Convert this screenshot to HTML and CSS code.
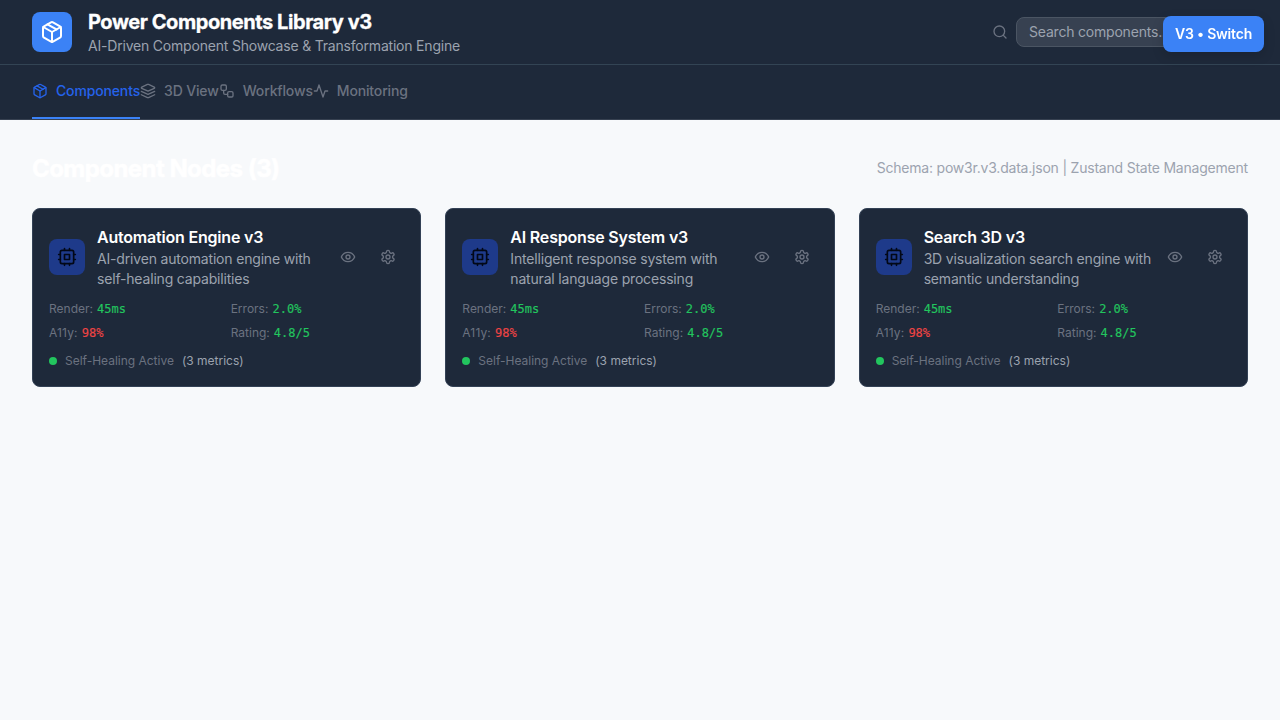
FILE: index.html
```html
<!DOCTYPE html>
<html lang="en">
<head>
<meta charset="utf-8">
<title>Power Components Library v3</title>
<link rel="stylesheet" href="styles.css">
</head>
<body>
<svg class="sprite" aria-hidden="true">
  <symbol id="box" viewBox="0 0 24 24"><path d="m7.5 4.27 9 5.15"/><path d="M21 8a2 2 0 0 0-1-1.73l-7-4a2 2 0 0 0-2 0l-7 4A2 2 0 0 0 3 8v8a2 2 0 0 0 1 1.73l7 4a2 2 0 0 0 2 0l7-4A2 2 0 0 0 21 16Z"/><path d="m3.3 7 8.7 5 8.7-5"/><path d="M12 22V12"/></symbol>
  <symbol id="layers" viewBox="0 0 24 24"><path d="m12.83 2.18a2 2 0 0 0-1.66 0L2.6 6.08a1 1 0 0 0 0 1.83l8.58 3.91a2 2 0 0 0 1.66 0l8.58-3.9a1 1 0 0 0 0-1.83Z"/><path d="m22 17.65-9.17 4.16a2 2 0 0 1-1.66 0L2 17.65"/><path d="m22 12.65-9.17 4.16a2 2 0 0 1-1.66 0L2 12.65"/></symbol>
  <symbol id="workflow" viewBox="0 0 24 24"><rect width="8" height="8" x="3" y="3" rx="2"/><path d="M7 11v4a2 2 0 0 0 2 2h4"/><rect width="8" height="8" x="13" y="13" rx="2"/></symbol>
  <symbol id="activity" viewBox="0 0 24 24"><path d="M22 12h-4l-3 9L9 3l-3 9H2"/></symbol>
  <symbol id="search" viewBox="0 0 24 24"><circle cx="11" cy="11" r="8"/><path d="m21 21-4.3-4.3"/></symbol>
  <symbol id="cpu" viewBox="0 0 24 24"><rect x="4" y="4" width="16" height="16" rx="2"/><rect x="9" y="9" width="6" height="6"/><path d="M15 2v2M15 20v2M2 15h2M2 9h2M20 15h2M20 9h2M9 2v2M9 20v2"/></symbol>
  <symbol id="eye" viewBox="0 0 24 24"><path d="M2 12s3-7 10-7 10 7 10 7-3 7-10 7-10-7-10-7Z"/><circle cx="12" cy="12" r="3"/></symbol>
  <symbol id="settings" viewBox="0 0 24 24"><path d="M12.22 2h-.44a2 2 0 0 0-2 2v.18a2 2 0 0 1-1 1.73l-.43.25a2 2 0 0 1-2 0l-.15-.08a2 2 0 0 0-2.73.73l-.22.38a2 2 0 0 0 .73 2.73l.15.1a2 2 0 0 1 1 1.72v.51a2 2 0 0 1-1 1.74l-.15.09a2 2 0 0 0-.73 2.73l.22.38a2 2 0 0 0 2.73.73l.15-.08a2 2 0 0 1 2 0l.43.25a2 2 0 0 1 1 1.73V20a2 2 0 0 0 2 2h.44a2 2 0 0 0 2-2v-.18a2 2 0 0 1 1-1.73l.43-.25a2 2 0 0 1 2 0l.15.08a2 2 0 0 0 2.73-.73l.22-.39a2 2 0 0 0-.73-2.73l-.15-.08a2 2 0 0 1-1-1.74v-.5a2 2 0 0 1 1-1.74l.15-.09a2 2 0 0 0 .73-2.73l-.22-.38a2 2 0 0 0-2.73-.73l-.15.08a2 2 0 0 1-2 0l-.43-.25a2 2 0 0 1-1-1.73V4a2 2 0 0 0-2-2z"/><circle cx="12" cy="12" r="3"/></symbol>
</svg>

<header class="header">
  <div class="brand">
    <div class="logo"><svg class="icon icon-lg"><use href="#box"/></svg></div>
    <div>
      <h1 class="brand-title">Power Components Library v3</h1>
      <p class="brand-sub">AI-Driven Component Showcase &amp; Transformation Engine</p>
    </div>
  </div>
  <div class="search">
    <svg class="icon"><use href="#search"/></svg>
    <input class="search-input" type="text" placeholder="Search components...">
  </div>
</header>
<button class="switch">V3 • Switch</button>

<nav class="nav">
  <a class="tab tab-active"><svg class="icon"><use href="#box"/></svg>Components</a>
  <a class="tab"><svg class="icon"><use href="#layers"/></svg>3D View</a>
  <a class="tab"><svg class="icon"><use href="#workflow"/></svg>Workflows</a>
  <a class="tab"><svg class="icon"><use href="#activity"/></svg>Monitoring</a>
</nav>

<main class="main">
  <div class="main-head">
    <h2 class="main-title">Component Nodes (3)</h2>
    <span class="schema">Schema: pow3r.v3.data.json | Zustand State Management</span>
  </div>
  <div class="cards">
    <article class="card">
      <div class="card-head">
        <div class="card-icon"><svg class="icon icon-md"><use href="#cpu"/></svg></div>
        <div class="card-text"><h3 class="card-title">Automation Engine v3</h3><p class="card-desc">AI-driven automation engine with self-healing capabilities</p></div>
        <div class="actions"><button class="action"><svg class="icon"><use href="#eye"/></svg></button><button class="action"><svg class="icon"><use href="#settings"/></svg></button></div>
      </div>
      <div class="metrics">
        <div>Render: <span class="value good">45ms</span></div><div>Errors: <span class="value good">2.0%</span></div>
        <div><span class="a11y">A11y:</span> <span class="value bad">98%</span></div><div>Rating: <span class="value good">4.8/5</span></div>
      </div>
      <div class="status"><span class="dot"></span><span>Self-Healing Active</span><span class="count">(3 metrics)</span></div>
    </article>
    <article class="card">
      <div class="card-head">
        <div class="card-icon"><svg class="icon icon-md"><use href="#cpu"/></svg></div>
        <div class="card-text"><h3 class="card-title">AI Response System v3</h3><p class="card-desc">Intelligent response system with natural language processing</p></div>
        <div class="actions"><button class="action"><svg class="icon"><use href="#eye"/></svg></button><button class="action"><svg class="icon"><use href="#settings"/></svg></button></div>
      </div>
      <div class="metrics">
        <div>Render: <span class="value good">45ms</span></div><div>Errors: <span class="value good">2.0%</span></div>
        <div><span class="a11y">A11y:</span> <span class="value bad">98%</span></div><div>Rating: <span class="value good">4.8/5</span></div>
      </div>
      <div class="status"><span class="dot"></span><span>Self-Healing Active</span><span class="count">(3 metrics)</span></div>
    </article>
    <article class="card">
      <div class="card-head">
        <div class="card-icon"><svg class="icon icon-md"><use href="#cpu"/></svg></div>
        <div class="card-text"><h3 class="card-title">Search 3D v3</h3><p class="card-desc">3D visualization search engine with semantic understanding</p></div>
        <div class="actions"><button class="action"><svg class="icon"><use href="#eye"/></svg></button><button class="action"><svg class="icon"><use href="#settings"/></svg></button></div>
      </div>
      <div class="metrics">
        <div>Render: <span class="value good">45ms</span></div><div>Errors: <span class="value good">2.0%</span></div>
        <div><span class="a11y">A11y:</span> <span class="value bad">98%</span></div><div>Rating: <span class="value good">4.8/5</span></div>
      </div>
      <div class="status"><span class="dot"></span><span>Self-Healing Active</span><span class="count">(3 metrics)</span></div>
    </article>
  </div>
</main>
</body>
</html>
```
FILE: styles.css
```css
* { box-sizing: border-box; margin: 0; padding: 0; }
body { background: #f7f9fb; font-family: Inter, "Liberation Sans", sans-serif; font-size: 14px; line-height: 20px; letter-spacing: -0.2px; color: #6b7280; min-height: 720px; }
button, input { font: inherit; letter-spacing: inherit; border: 0; background: none; color: inherit; }
.sprite { display: none; }
.icon { width: 16px; height: 16px; flex: none; display: block; fill: none; stroke: currentColor; stroke-width: 2; stroke-linecap: round; stroke-linejoin: round; }
.icon-md { width: 20px; height: 20px; }
.icon-lg { width: 24px; height: 24px; }

.header { height: 65px; padding: 0 32px; display: flex; align-items: center; justify-content: space-between; background: #1e293a; border-bottom: 1px solid #334454; }
.brand { display: flex; align-items: center; gap: 16px; }
.logo { width: 40px; height: 40px; display: flex; align-items: center; justify-content: center; border-radius: 8px; background: #3b82f6; color: #fff; }
.brand-title { font-size: 20px; line-height: 28px; font-weight: 700; letter-spacing: -0.43px; -webkit-text-stroke: 0.3px #fff; color: #fff; }
.brand-sub { color: #9ca3af; }
.search { display: flex; align-items: center; gap: 8px; }
.search-input { width: 232px; height: 30px; padding: 0 12px 2px; border: 1px solid #4b5563; border-radius: 8px; background: #374151; }
.search-input::placeholder { color: #9ca3af; opacity: 1; }
.switch { position: fixed; top: 16px; right: 16px; width: 101px; height: 36px; border-radius: 8px; background: #3b82f6; color: #fff; font-weight: 600; box-shadow: 0 4px 12px rgba(0, 0, 0, 0.15); white-space: nowrap; }

.nav { height: 55px; padding: 0 32px; display: flex; background: #1e293a; border-bottom: 1px solid #374151; }
.tab { display: flex; align-items: center; gap: 8px; font-weight: 500; letter-spacing: -0.15px; border-bottom: 2px solid transparent; }
.tab-active { color: #2563eb; border-bottom-color: #3b82f6; }

.main { padding: 32px; }
.main-head { display: flex; align-items: center; justify-content: space-between; margin-bottom: 24px; }
.main-title { height: 32px; font-size: 24px; line-height: 34px; font-weight: 700; letter-spacing: -0.55px; -webkit-text-stroke: 0.6px #fff; color: #fff; }
.schema { color: #9ca3af; letter-spacing: -0.21px; }
.cards { display: grid; grid-template-columns: repeat(3, minmax(0, 1fr)); gap: 24px; }
.card { padding: 16px; height: 179px; border: 1px solid #334155; border-radius: 8px; background: #1e293a; }
.card-head { display: flex; align-items: center; gap: 12px; margin-bottom: 12px; }
.card-icon { flex: none; width: 36px; height: 36px; display: flex; align-items: center; justify-content: center; border-radius: 8px; background: #1e3a8a; color: #020817; }
.card-text { flex: 1; min-width: 0; margin-right: -10px; }
.card-title { font-size: 16px; line-height: 24px; font-weight: 600; color: #fff; }
.card-desc { color: #9ca3af; letter-spacing: -0.18px; }
.actions { display: flex; gap: 8px; }
.action { width: 32px; height: 32px; display: flex; align-items: center; justify-content: center; }
.metrics { display: grid; grid-template-columns: 1fr 1fr; gap: 8px; font-size: 12px; line-height: 16px; letter-spacing: 0; margin-bottom: 12px; }
.metrics > div { height: 16px; }
.a11y { letter-spacing: 0.15px; }
.value { margin-left: 0.7px; font-family: "DejaVu Sans Mono", monospace; -webkit-text-stroke: 0.15px currentColor; }
.good { color: #22c55e; }
.bad { color: #ef4444; }
.status { display: flex; align-items: center; gap: 8px; font-size: 12px; line-height: 16px; letter-spacing: -0.01px; }
.dot { width: 8px; height: 8px; border-radius: 50%; background: #22c55e; }
.count { color: #9ca3af; }
```
